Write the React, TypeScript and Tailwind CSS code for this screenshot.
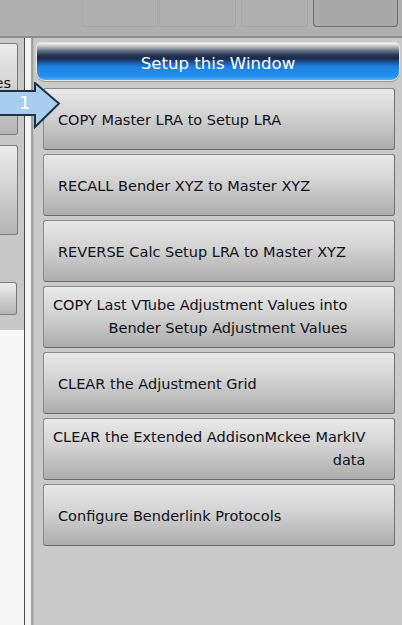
const buttons: { lines: string[] }[] = [
  { lines: ["COPY Master LRA to Setup LRA"] },
  { lines: ["RECALL Bender XYZ to Master XYZ"] },
  { lines: ["REVERSE Calc Setup LRA to Master XYZ"] },
  { lines: ["COPY Last VTube Adjustment Values into", "Bender Setup Adjustment Values"] },
  { lines: ["CLEAR the Adjustment Grid"] },
  { lines: ["CLEAR the Extended AddisonMckee MarkIV", "data"] },
  { lines: ["Configure Benderlink Protocols"] },
];

const font = { fontFamily: "'DejaVu Sans', 'Liberation Sans', sans-serif" };

export default function App() {
  return (
    <div
      className="relative w-[402px] h-[625px] overflow-hidden flex flex-col bg-[#c8c8c8] text-[#101018]"
      style={font}
    >
      {/* top strip */}
      <div className="h-[38px] shrink-0 flex items-start pl-[82px] bg-[#b0b0b0] border-b-2 border-[#8c8c8c]">
        <div className="w-[76px] h-[27px] border border-t-0 border-[#a6a6a6] rounded-b-[3px]" />
        <div className="w-[77px] h-[27px] ml-px border border-t-0 border-[#a6a6a6] rounded-b-[3px]" />
        <div className="w-[67px] h-[27px] ml-[5px] border border-t-0 border-[#a6a6a6] rounded-b-[3px]" />
        <div className="w-[85px] h-[27px] ml-[5px] bg-[#a9a9a9] border border-t-0 border-[#6c6c6c] rounded-b-[4px]" />
      </div>

      <div className="flex flex-1 min-h-0">
        {/* left panel */}
        <div className="w-[24px] shrink-0 flex flex-col bg-[#c8c8c8]">
          <div className="mt-[5px] h-[92px] w-[18px] rounded-r-[3px] border border-l-0 border-[#7a7a7a] bg-[linear-gradient(to_bottom,#ececec,#b4b4b4)] overflow-hidden">
            <div className="pt-[30px] text-[14.5px] leading-[18px] whitespace-nowrap flex justify-end pr-[6px]">es</div>
          </div>
          <div className="mt-[10px] h-[90px] w-[18px] rounded-r-[3px] border border-l-0 border-[#7a7a7a] bg-[linear-gradient(to_bottom,#ececec,#b4b4b4)]" />
          <div className="mt-[47px] h-[33px] w-[17px] rounded-r-[3px] border border-l-0 border-[#7a7a7a] bg-[linear-gradient(to_bottom,#ececec,#b4b4b4)]" />
          <div className="mt-[15px] flex-1 bg-[#f7f7f7]" />
        </div>

        {/* separator */}
        <div className="w-px shrink-0 bg-[#4a4a4a]" />
        <div className="w-[6px] shrink-0 bg-[#f2f2f2]" />
        <div className="w-[2px] shrink-0 bg-[#a0a0a0]" />
        <div className="w-px shrink-0 bg-[#b8b8b8]" />

        {/* right panel */}
        <div className="flex-1 flex flex-col bg-[#c9c9c9]">
          <div className="mt-[4px] ml-[2px] mr-[2px] h-[39px] p-px rounded-t-[5px] rounded-b-[9px] bg-[#e4e4e4] shadow-[0_1px_0_#9a9a9a]">
            <div className="h-full rounded-t-[4px] rounded-b-[8px] flex items-center justify-center text-white text-[16.6px] bg-[linear-gradient(to_bottom,#f4f4f4_0%,#c4c8cf_8%,#6c7688_20%,#22324f_34%,#1a2b4c_42%,#1a5aa8_54%,#1d80e0_64%,#2590f0_90%,#58aef6_100%)]">
              <span className="pt-[5px]">Setup this Window</span>
            </div>
          </div>

          <div className="mt-[7px] ml-[9px] mr-[7px] flex flex-col gap-[4px]">
            {buttons.map((b, i) => (
              <div
                key={i}
                className={
                  "h-[62px] rounded-[3px] border border-[#8a8a8a] border-b-[#6a6a6a] border-r-[#707070] bg-[linear-gradient(to_bottom,#e9e9e9,#d2d2d2_45%,#acacac)] flex items-center text-[14.5px] " +
                  (b.lines.length > 1 ? "pl-[9px] leading-[23px]" : "pl-[14px] leading-[19px] pt-[2px]")
                }
              >
                <div className="inline-block text-right whitespace-nowrap">
                  {b.lines.map((l, j) => (
                    <div key={j}>{l}</div>
                  ))}
                </div>
              </div>
            ))}
          </div>
        </div>
      </div>

      {/* step arrow badge */}
      <div className="absolute left-0 top-[82px] w-[62px] h-[47px]">
        <svg width="62" height="47" viewBox="0 0 62 47">
          <polygon
            points="-2,9 35,9 35,1 59,21.5 35,45 35,33 -2,33"
            fill="#a8cdf0"
            stroke="#1d3246"
            strokeWidth="2"
            strokeLinejoin="miter"
          />
        </svg>
        <span className="absolute left-[19px] top-[9px] text-white text-[18px] leading-[24px]">1</span>
      </div>
    </div>
  );
}
